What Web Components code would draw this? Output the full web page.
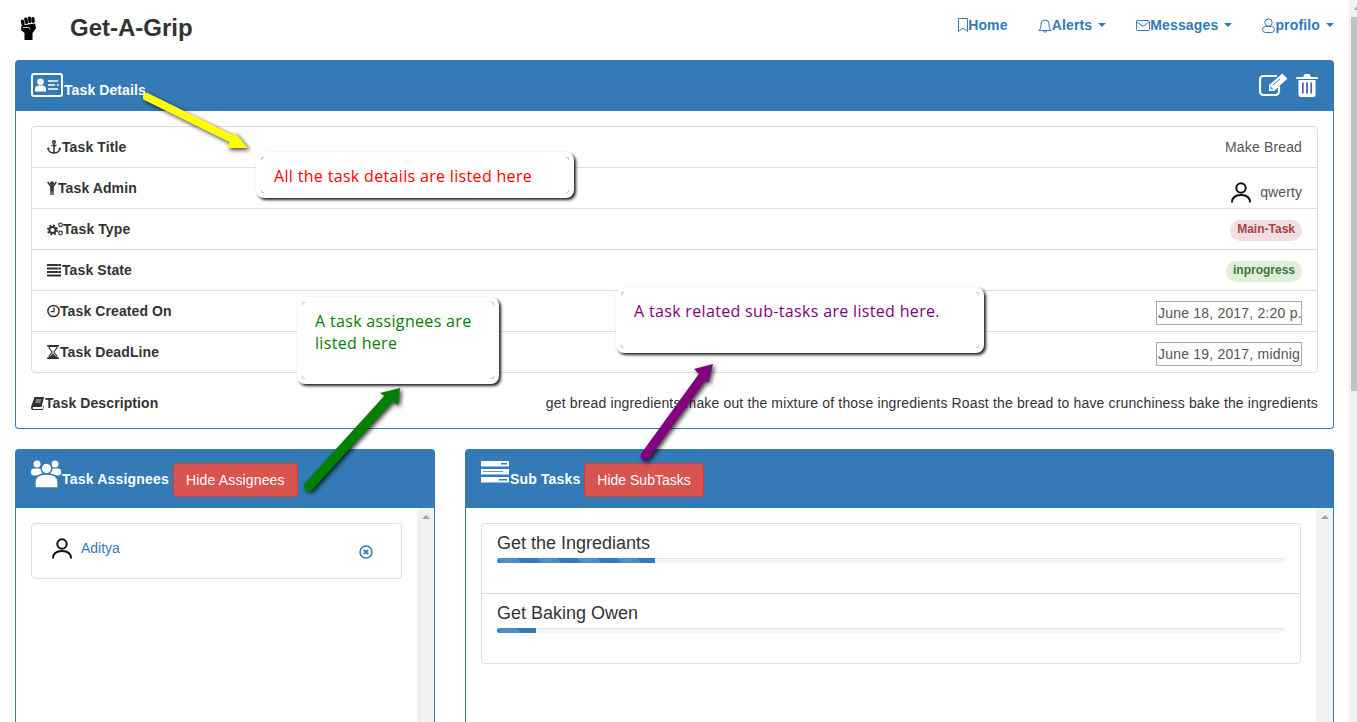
<!DOCTYPE html>
<html>
<head>
<meta charset="utf-8">
<title>Get-A-Grip</title>
<style>
    html, body { margin: 0; height: 100%; overflow: hidden; background: #fff; }
    body { font: 14px/20px "Liberation Sans", Arial, sans-serif; color: #333; }
</style>
</head>
<body>
<page-shell>
    <app-navbar>
        <nav-link icon="bookmark">Home</nav-link>
        <nav-link icon="bell" caret>Alerts</nav-link>
        <nav-link icon="envelope" caret>Messages</nav-link>
        <nav-link icon="person" caret>profilo</nav-link>
    </app-navbar>

    <task-panel style="--head-h:51px; margin:0 15px 20px">
        <app-icon slot="icon" name="idcard" style="margin-bottom:3px"></app-icon>
        <span slot="title" style="margin-left:1px;letter-spacing:.1px">Task Details</span>
        <span slot="actions" style="display:flex;gap:8px;margin-bottom:3px">
            <app-icon name="edit"></app-icon>
            <app-icon name="trash"></app-icon>
        </span>
        <list-box style="margin:15px 15px 0">
            <detail-row icon="anchor" label="Task Title"><span style="color:#555;letter-spacing:.15px;margin-top:-1px">Make Bread</span></detail-row>
            <detail-row icon="child" label="Task Admin">
                <span style="display:flex;align-items:center;gap:9px;margin-top:9px;color:#555;letter-spacing:.1px">
                    <app-icon name="avatar"></app-icon><span style="margin-top:-1px">qwerty</span>
                </span>
            </detail-row>
            <detail-row icon="cogs" label="Task Type"><status-badge kind="danger">Main-Task</status-badge></detail-row>
            <detail-row icon="tasks" label="Task State"><status-badge kind="success">inprogress</status-badge></detail-row>
            <detail-row icon="clock" label="Task Created On"><date-box>June 18, 2017, 2:20 p.</date-box></detail-row>
            <detail-row icon="hourglass" label="Task DeadLine"><date-box>June 19, 2017, midnig</date-box></detail-row>
        </list-box>
        <description-row icon="book" label="Task Description">get bread ingredients make out the mixture of those ingredients Roast the bread to have crunchiness bake the ingredients</description-row>
    </task-panel>

    <panel-row>
        <task-panel scroll style="--head-h:59px">
            <app-icon slot="icon" name="users" style="margin-bottom:9px"></app-icon>
            <span slot="title" style="margin:0 0 8px 1px;letter-spacing:.2px">Task Assignees</span>
            <danger-button slot="extra" style="letter-spacing:.15px">Hide Assignees</danger-button>
            <list-box style="margin:15px">
                <assignee-row>Aditya</assignee-row>
            </list-box>
        </task-panel>
        <task-panel scroll style="--head-h:59px">
            <app-icon slot="icon" name="server" style="margin-bottom:13px"></app-icon>
            <span slot="title" style="margin-bottom:8px;letter-spacing:.15px">Sub Tasks</span>
            <danger-button slot="extra">Hide SubTasks</danger-button>
            <list-box style="margin:15px">
                <subtask-row percent="20">Get the Ingrediants</subtask-row>
                <subtask-row percent="5">Get Baking Owen</subtask-row>
            </list-box>
        </task-panel>
    </panel-row>

    <annotation-arrow slot="over" color="#ffff00" line="147,97 238,142" width="8" head="248,148 234,132 227,148"></annotation-arrow>
    <annotation-arrow slot="over" color="#008000" line="309,486 389,398" width="10" head="400,388 380,393 398,405"></annotation-arrow>
    <annotation-arrow slot="over" color="#800080" line="645,456 703,376" width="9" head="713,364 694,369 708,383"></annotation-arrow>

    <call-out slot="over" style="left:256px;top:152px;width:318px;height:46px;color:#ff0000">All the task details are listed here</call-out>
    <call-out slot="over" style="left:297px;top:297px;width:202px;height:87px;color:#008000">A task assignees are listed here</call-out>
    <call-out slot="over" style="left:616px;top:287px;width:368px;height:66px;color:#800080">A task related sub-tasks are listed here.</call-out>
</page-shell>

<script>
(function () {
    const ICONS = {
        bookmark: [10, 14, '<path d="M.5.5h9v13L5 10 .5 13.500z" fill="none" stroke="currentColor"/>'],
        bell: [14, 15, '<path d="M.8 12.500c1.700-1.500 2.200-3 2.200-6.500a4 4 0 0 1 8 0c0 3.500.5 5 2.200 6.500zM5.300 12.500a1.700 1.700 0 0 0 3.400 0" fill="none" stroke="currentColor"/>'],
        envelope: [14, 11, '<rect x=".5" y=".5" width="13" height="10" rx="1" fill="none" stroke="currentColor"/><path d="M.5 1.500 7 6.500l6.500-5" fill="none" stroke="currentColor"/>'],
        person: [13, 15, '<circle cx="6.500" cy="4.500" r="3.700" fill="none" stroke="currentColor"/><rect x=".5" y="8.500" width="12" height="6" rx="3" fill="none" stroke="currentColor"/>'],
        anchor: [15, 14, '<g fill="none" stroke="currentColor" stroke-width="1.500"><circle cx="7" cy="2" r="1.300"/><path d="M7 3.500V13M4.500 5.500h5M1 8c.3 3.300 3 5 6 5s5.700-1.700 6-5"/></g><path d="M0 9.500 1 7l2 2zM14 9.500 13 7l-2 2z" fill="currentColor"/>'],
        child: [11, 14, '<circle cx="5" cy="2.200" r="2" fill="currentColor"/><path d="M.7 1 3.500 5h3L9.300 1" fill="none" stroke="currentColor" stroke-width="1.500"/><path d="M3.200 5h3.600v4l-.2 5H5.300V10h-.6v4H3.400l-.2-5z" fill="currentColor"/>'],
        cogs: [16, 14, '<g fill="none" stroke="currentColor"><circle cx="5.500" cy="8" r="3.100" stroke-width="2"/><circle cx="5.500" cy="8" r="4.700" stroke-width="1.800" stroke-dasharray="1.800 1.900"/><circle cx="13.500" cy="2.800" r="1.800" stroke-width="1.200"/><circle cx="13.500" cy="11" r="1.800" stroke-width="1.200"/></g>'],
        tasks: [15, 13, '<path d="M0 0h14v2H0zM0 3.500h14v2H0zM0 7h14v2H0zM0 10.500h14v2H0z" fill="currentColor"/><path d="M10.500.7h1.200v.6h-1.200zM10.500 4.200h1.200v.6h-1.200zM10.500 7.700h1.200v.6h-1.200z" fill="#fff"/>'],
        clock: [13, 14, '<circle cx="6.500" cy="7" r="5.600" fill="none" stroke="currentColor" stroke-width="1.500"/><path d="M7 3.500v4.100H3.800" fill="none" stroke="currentColor" stroke-width="1.300"/>'],
        hourglass: [13, 14, '<path d="M0 0h12v1.500H0zM0 12.500h12V14H0z" fill="currentColor"/><path d="M1.800 1.500c0 3 3.200 3.800 3.200 5.500S1.800 9.500 1.800 12.500h8.400c0-3-3.200-3.800-3.200-5.500s3.200-2.500 3.200-5.500z" fill="none" stroke="currentColor" stroke-width="1.100"/><path d="M2.500 12.500c.5-2 3.500-3 3.500-5 0 2 3 3 3.500 5z" fill="currentColor"/>'],
        book: [14, 13, '<path d="M3.500 0H13l-2.500 10H2.600c-1.200 0-1.200 2 0 2h8.900l1-4 .5.500L11.800 13H2C.5 13-.3 11.500 0 10z" fill="currentColor"/><path d="M5 3h5M4.500 5h5" stroke="#fff" stroke-width=".8"/>'],
        idcard: [32, 24, '<rect x="1" y="1" width="30" height="22" rx="2" fill="none" stroke="#fff" stroke-width="2"/><circle cx="9.500" cy="8.800" r="3.300" fill="#fff"/><path d="M4 18.500v-2c0-3 2-4 3-4h5c1 0 3 1 3 4v2z" fill="#fff"/><path d="M17 8h10M17 12h7M26 12h2M17 16h10" stroke="#fff" stroke-width="1.600"/>'],
        edit: [29, 23, '<path d="M20 13.500v5a3.500 3.500 0 0 1-3.500 3.500h-12A3.500 3.500 0 0 1 1 18.500v-12A3.500 3.500 0 0 1 4.500 3H18" fill="none" stroke="#fff" stroke-width="2.200"/><path d="M10 12 22.500 1.200a1 1 0 0 1 1.400 0l3.800 3.600a1 1 0 0 1 0 1.400L15 18h-5z" fill="#fff"/><path d="M12 13.500v2.500h2.500M14 12 21 6" fill="none" stroke="#337ab7"/>'],
        trash: [22, 24, '<path d="M7 4 8.500 1h5L15 4h6a1 1 0 0 1 0 2H1a1 1 0 0 1 0-2z" fill="#fff"/><path d="M2.500 7h17v15a2 2 0 0 1-2 2h-13a2 2 0 0 1-2-2z" fill="#fff"/><path d="M6 9.500h1.700v11H6zM10.200 9.500h1.700v11h-1.700zM14.400 9.500h1.700v11h-1.700z" fill="#4f5fb5"/>'],
        users: [30, 28, '<g fill="#fff"><circle cx="6" cy="4" r="3.500"/><circle cx="24" cy="4" r="3.500"/><rect x="0" y="8.500" width="11" height="7" rx="3"/><rect x="19" y="8.500" width="11" height="7" rx="3"/><g stroke="#337ab7" stroke-width="1.300"><circle cx="15.500" cy="8.500" r="5.300"/><path d="M4 28v-6c0-5 4-8 11.500-8S27 17 27 22v6z"/></g></g>'],
        server: [29, 23, '<path d="M0 0h28v5.500H0zM0 8h28v5.500H0zM0 16h28v5.500H0z" fill="#fff"/><path d="M20 2h6v1.500h-6zM2 10h20v.8H2zM18 18h8v1.500h-8z" fill="#337ab7"/>'],
        avatar: [20, 21, '<circle cx="10" cy="6" r="4.700" fill="none" stroke="#111" stroke-width="2"/><path d="M1 20.500c0-5.500 4-7.500 9-7.500s9 2 9 7.500" fill="none" stroke="#111" stroke-width="2"/>'],
        close: [14, 14, '<circle cx="7" cy="7" r="6" fill="none" stroke="currentColor" stroke-width="1.500"/><path d="M4.800 4.800l4.400 4.400M9.200 4.800 4.800 9.200" stroke="currentColor" stroke-width="1.800"/>'],
        fist: [16, 24, '<g fill="#000"><rect x="1" y="3.500" width="3.200" height="6" rx="1.400" transform="rotate(-15 2.600 6)"/><rect x="4.600" y="1.500" width="3.200" height="6.500" rx="1.400" transform="rotate(-12 6 5)"/><rect x="8.200" y=".5" width="3.200" height="6.500" rx="1.400" transform="rotate(-10 10 4)"/><rect x="11.600" y="1" width="3" height="6" rx="1.400" transform="rotate(-8 13 4)"/><path d="M1.500 9.500 15 7.500l1 5-3.500 4.500V24H4.500v-7L1 14z"/></g><path d="M3 11.500h6l1 2" fill="none" stroke="#fff" stroke-width=".8"/>']
    };

    // base for everything here, markup and style go straight in the shadow root
    class Base extends HTMLElement {
        render(html) {
            this.attachShadow({mode: 'open'}).innerHTML = html;
        }
    }

    class AppIcon extends Base {
        connectedCallback() {
            const [w, h, body] = ICONS[this.getAttribute('name')];
            this.render(`
                <style>:host { display: inline-block; line-height: 0; flex: none; } svg { display: block; }</style>
                <svg width="${w}" height="${h}" viewBox="0 0 ${w} ${h}">${body}</svg>`);
        }
    }

    class PageShell extends Base {
        connectedCallback() {
            this.render(`
                <style>
                    :host { display: flex; height: 100vh; overflow: hidden; position: relative; }
                    .main { flex: 1; min-width: 0; }
                    .bar { flex: none; width: 8px; background: #f1f1f1; }
                    .arrow { height: 17px; display: flex; justify-content: flex-end; align-items: flex-start; }
                    .arrow i { width: 3px; height: 4px; margin-top: 6px; background: #a3a3a3; clip-path: polygon(100% 0, 100% 100%, 0 100%); }
                    .thumb { margin-left: 2px; height: 374px; background: #c1c1c1; }
                </style>
                <div class="main"><slot></slot></div>
                <div class="bar"><div class="arrow"><i></i></div><div class="thumb"></div></div>
                <slot name="over"></slot>`);
        }
    }

    class AppNavbar extends Base {
        connectedCallback() {
            this.render(`
                <style>
                    :host { display: flex; height: 60px; padding-right: 15px; }
                    .logo { margin: 16px 0 0 20px; }
                    .brand { margin: 14px 0 0 34px; font-size: 24px; line-height: 28px; font-weight: bold; color: #333; }
                    nav { margin: 15px 0 0 auto; display: flex; gap: 30px; }
                </style>
                <app-icon class="logo" name="fist"></app-icon>
                <div class="brand">Get-A-Grip</div>
                <nav><slot></slot></nav>`);
        }
    }

    class NavLink extends Base {
        connectedCallback() {
            const caret = this.hasAttribute('caret') ? '<i class="caret"></i>' : '';
            this.render(`
                <style>
                    :host { display: flex; align-items: center; height: 20px; color: #337ab7; font-weight: bold; letter-spacing: .15px; }
                    .caret { width: 0; height: 0; margin-left: 6px; border: 4px solid transparent; border-top-color: #337ab7; border-bottom: 0; }
                </style>
                <app-icon name="${this.getAttribute('icon')}"></app-icon><slot></slot>${caret}`);
        }
    }

    class TaskPanel extends Base {
        connectedCallback() {
            const strip = this.hasAttribute('scroll') ? '<div class="strip"><i></i></div>' : '';
            this.render(`
                <style>
                    :host { display: block; }
                    :host([scroll]) .body { min-height: 300px; display: flex; }
                    .head { height: var(--head-h); box-sizing: border-box; display: flex; align-items: flex-end; padding: 0 16px 11px; background: #337ab7; border-radius: 4px 4px 0 0; color: #fff; font-weight: bold; }
                    .actions { margin-left: auto; }
                    .extra { margin-left: 4px; }
                    .body { border: 1px solid #337ab7; border-top: 0; border-radius: 0 0 4px 4px; }
                    .content { display: flow-root; flex: 1; min-width: 0; }
                    .strip { flex: none; width: 17px; background: #f1f1f1; }
                    .strip i { display: block; width: 0; height: 0; margin: 7px auto 0; border: 4px solid transparent; border-top: 0; border-bottom: 4px solid #a3a3a3; }
                </style>
                <div class="head">
                    <slot name="icon"></slot>
                    <slot name="title"></slot>
                    <div class="extra"><slot name="extra"></slot></div>
                    <div class="actions"><slot name="actions"></slot></div>
                </div>
                <div class="body"><div class="content"><slot></slot></div>${strip}</div>`);
        }
    }

    class ListBox extends Base {
        connectedCallback() {
            this.render(`
                <style>:host { display: block; border: 1px solid #ddd; border-radius: 4px; }</style>
                <slot></slot>`);
        }
    }

    class DetailRow extends Base {
        connectedCallback() {
            this.render(`
                <style>
                    :host { display: flex; align-items: center; justify-content: space-between; height: 40px; padding: 0 15px; }
                    :host(:not(:first-child)) { border-top: 1px solid #ddd; }
                    .label { display: flex; align-items: center; font-weight: bold; color: #333; letter-spacing: .1px; }
                </style>
                <div class="label"><app-icon name="${this.getAttribute('icon')}"></app-icon>${this.getAttribute('label')}</div>
                <slot></slot>`);
        }
    }

    class DescriptionRow extends Base {
        connectedCallback() {
            this.render(`
                <style>
                    :host { display: flex; align-items: center; justify-content: space-between; margin: 20px 15px 15px; height: 20px; }
                    .label { display: flex; align-items: center; font-weight: bold; letter-spacing: .1px; }
                    .text { letter-spacing: .15px; }
                </style>
                <div class="label"><app-icon name="${this.getAttribute('icon')}"></app-icon>${this.getAttribute('label')}</div>
                <div class="text"><slot></slot></div>`);
        }
    }

    class StatusBadge extends Base {
        connectedCallback() {
            this.render(`
                <style>
                    :host { display: block; margin-top: 2px; height: 21px; padding: 0 7px; border-radius: 10.5px; font-size: 12px; line-height: 19px; font-weight: bold; }
                    :host([kind=danger]) { background: #f2dede; color: #a94442; }
                    :host([kind=success]) { background: #dff0d8; color: #3c763d; }
                </style>
                <slot></slot>`);
        }
    }

    class DateBox extends Base {
        connectedCallback() {
            this.render(`
                <style>
                    :host { display: block; margin-top: 4px; box-sizing: border-box; width: 146px; height: 24px; padding: 0 1px; border: 1px solid #a9a9a9; color: #555; line-height: 22px; letter-spacing: .2px; white-space: nowrap; overflow: hidden; }
                </style>
                <slot></slot>`);
        }
    }

    class PanelRow extends Base {
        connectedCallback() {
            this.render(`
                <style>:host { display: grid; grid-template-columns: 420px 1fr; gap: 30px; padding: 0 15px; }</style>
                <slot></slot>`);
        }
    }

    class DangerButton extends Base {
        connectedCallback() {
            this.render(`
                <style>
                    :host { display: block; box-sizing: border-box; height: 34px; padding: 0 12px; background: #d9534f; border: 1px solid #d43f3a; border-radius: 4px; color: #fff; font-weight: normal; line-height: 32px; white-space: nowrap; }
                </style>
                <slot></slot>`);
        }
    }

    class AssigneeRow extends Base {
        connectedCallback() {
            this.render(`
                <style>
                    :host { display: flex; height: 54px; padding: 14px 28px 0 20px; box-sizing: border-box; color: #337ab7; }
                    .who { margin-left: 9px; }
                    app-icon.x { margin: 7px 0 0 auto; }
                </style>
                <app-icon name="avatar"></app-icon>
                <div class="who"><slot></slot></div>
                <app-icon class="x" name="close"></app-icon>`);
        }
    }

    class SubtaskRow extends Base {
        connectedCallback() {
            this.render(`
                <style>
                    :host { display: block; box-sizing: border-box; height: 69px; padding: 9px 15px 0; font-size: 18px; line-height: 20px; color: #333; }
                    :host(:not(:first-child)) { height: 70px; border-top: 1px solid #ddd; }
                    .track { height: 5px; margin-top: 5px; background: #f5f5f5; border-radius: 3px; overflow: hidden; box-shadow: inset 0 1px 1px rgba(0,0,0,.08); }
                    .fill { height: 100%; width: ${this.getAttribute('percent')}%; background-color: #337ab7;
                        background-image: linear-gradient(45deg, rgba(255,255,255,.15) 25%, transparent 25%, transparent 50%, rgba(255,255,255,.15) 50%, rgba(255,255,255,.15) 75%, transparent 75%, transparent);
                        background-size: 40px 40px; }
                </style>
                <slot></slot>
                <div class="track"><div class="fill"></div></div>`);
        }
    }

    class CallOut extends Base {
        connectedCallback() {
            this.render(`
                <style>
                    :host { position: absolute; box-sizing: border-box; padding: 13px 18px; background: #fff; border-radius: 8px; box-shadow: 2px 2px 3px #222; font: 16px/22px "Open Sans", sans-serif; letter-spacing: .33px; }
                    i { position: absolute; width: 2px; height: 2px; border: 0 solid #c4c4c4; }
                    .a { left: 5px; top: 5px; border-width: 1px 0 0 1px; border-top-left-radius: 2px; }
                    .b { right: 5px; top: 5px; border-width: 1px 1px 0 0; border-top-right-radius: 2px; }
                    .c { left: 5px; bottom: 5px; border-width: 0 0 1px 1px; border-bottom-left-radius: 2px; }
                    .d { right: 5px; bottom: 5px; border-width: 0 1px 1px 0; border-bottom-right-radius: 2px; }
                </style>
                <i class="a"></i><i class="b"></i><i class="c"></i><i class="d"></i>
                <slot></slot>`);
        }
    }

    class AnnotationArrow extends Base {
        connectedCallback() {
            const [a, b] = this.getAttribute('line').split(' ').map(p => p.split(','));
            const color = this.getAttribute('color');
            this.render(`
                <style>:host { position: absolute; left: 0; top: 0; pointer-events: none; } svg { display: block; }</style>
                <svg width="1357" height="722" style="filter: drop-shadow(2px 2px 2px rgba(0,0,0,.75))">
                    <line x1="${a[0]}" y1="${a[1]}" x2="${b[0]}" y2="${b[1]}" stroke="${color}" stroke-width="${this.getAttribute('width')}" stroke-linecap="round"/>
                    <polygon points="${this.getAttribute('head')}" fill="${color}"/>
                </svg>`);
        }
    }

    customElements.define('app-icon', AppIcon);
    customElements.define('page-shell', PageShell);
    customElements.define('app-navbar', AppNavbar);
    customElements.define('nav-link', NavLink);
    customElements.define('task-panel', TaskPanel);
    customElements.define('list-box', ListBox);
    customElements.define('detail-row', DetailRow);
    customElements.define('description-row', DescriptionRow);
    customElements.define('status-badge', StatusBadge);
    customElements.define('date-box', DateBox);
    customElements.define('panel-row', PanelRow);
    customElements.define('danger-button', DangerButton);
    customElements.define('assignee-row', AssigneeRow);
    customElements.define('subtask-row', SubtaskRow);
    customElements.define('call-out', CallOut);
    customElements.define('annotation-arrow', AnnotationArrow);
})();
</script>
</body>
</html>
